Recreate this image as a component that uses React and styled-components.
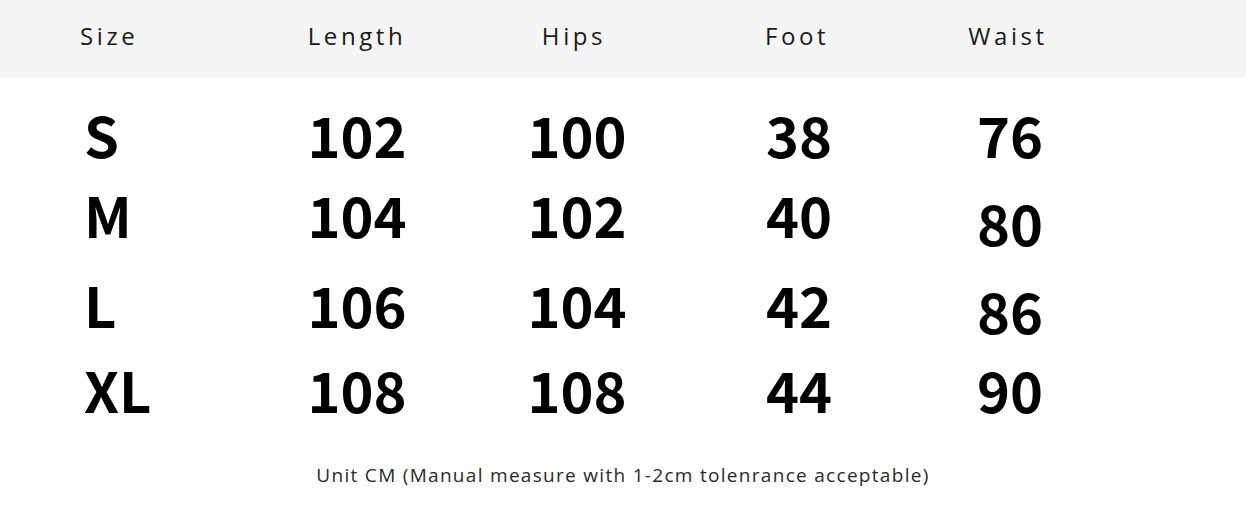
import React from "react";
import styled, { createGlobalStyle } from "styled-components";

const GlobalStyle = createGlobalStyle`
  html, body {
    margin: 0;
    padding: 0;
    background: #ffffff;
  }
`;

const COLS = "260px 194px 240px 206px 216px 1fr";

const Page = styled.div`
  width: 1246px;
  height: 505px;
  background: #ffffff;
  display: flex;
  flex-direction: column;
  overflow: hidden;
`;

const Header = styled.div`
  height: 77px;
  background: #f5f5f5;
  display: grid;
  grid-template-columns: ${COLS};
  align-items: center;
`;

const HeadCell = styled.div`
  font-family: "Open Sans", "Noto Sans", sans-serif;
  font-weight: 400;
  font-size: 24px;
  letter-spacing: 3.6px;
  color: #1a1a1a;
  text-align: ${({ $left }) => ($left ? "left" : "center")};
  padding-left: ${({ $left }) => ($left ? "80px" : "0")};
  padding-bottom: 7px;
`;

const Body = styled.div`
  display: grid;
  grid-template-columns: ${COLS};
  padding-top: 17px;
`;

const Cell = styled.div`
  font-family: "Noto Sans CJK SC", "Noto Sans", sans-serif;
  font-weight: 700;
  font-size: 56px;
  line-height: ${({ $h }) => $h}px;
  color: #000000;
  text-align: ${({ $left }) => ($left ? "left" : "center")};
  padding-left: ${({ $left }) => ($left ? "84px" : "0")};
  margin-top: ${({ $drop }) => $drop || 0}px;
  margin-bottom: ${({ $drop }) => -($drop || 0)}px;
  transform: translateX(${({ $nudge }) => $nudge || 0}px);
`;

const Footer = styled.div`
  flex: 1;
  display: flex;
  align-items: center;
  justify-content: center;
  padding-top: 20px;
  font-family: "Open Sans", "Noto Sans", sans-serif;
  font-size: 19px;
  letter-spacing: 1.3px;
  color: #2a2a2a;
`;

const heads = ["Size", "Length", "Hips", "Foot", "Waist"];
const nudge = [0, 0, 3, 2, 2];

const rows = [
  { h: 80, cells: ["S", "102", "100", "38", "76"], drop: [0, 0, 0, 0, 0] },
  { h: 80, cells: ["M", "104", "102", "40", "80"], drop: [0, 0, 0, 0, 8] },
  { h: 100, cells: ["L", "106", "104", "42", "86"], drop: [0, 0, 0, 0, 6] },
  { h: 70, cells: ["XL", "108", "108", "44", "90"], drop: [0, 0, 0, 0, 0] },
];

export default function App() {
  return (
    <Page>
      <GlobalStyle />
      <Header>
        {heads.map((h, i) => (
          <HeadCell key={h} $left={i === 0}>
            {h}
          </HeadCell>
        ))}
        <div />
      </Header>
      <Body>
        {rows.map((r) => (
          <React.Fragment key={r.cells[0]}>
            {r.cells.map((c, i) => (
              <Cell
                key={i}
                $left={i === 0}
                $h={r.h}
                $drop={r.drop[i]}
                $nudge={nudge[i]}
              >
                {c}
              </Cell>
            ))}
            <div />
          </React.Fragment>
        ))}
      </Body>
      <Footer>Unit CM (Manual measure with 1-2cm tolenrance acceptable)</Footer>
    </Page>
  );
}
